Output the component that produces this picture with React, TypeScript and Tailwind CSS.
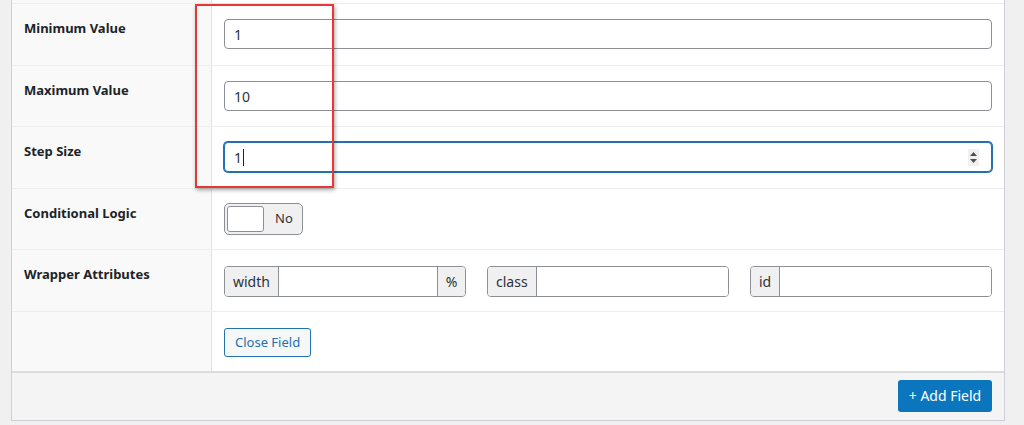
import React from "react";

const font = { fontFamily: '"Noto Sans", "Open Sans", "Liberation Sans", sans-serif' };

function Row({ label, h, children }: { label?: string; h: string; children?: React.ReactNode }) {
  return (
    <div className={`flex border-t border-[#eeeeee] ${h}`}>
      <div className="w-[200px] shrink-0 bg-[#f9f9f9] border-r border-[#e1e1e1] pl-[12px] pt-[16px]">
        {label && <div className="text-[13px] font-bold text-[#1d2327] leading-[16px]">{label}</div>}
      </div>
      <div className="flex-1 pl-[12px] pr-[12px] pt-[15px]">{children}</div>
    </div>
  );
}

function TextInput({ value, focused, spinner }: { value: string; focused?: boolean; spinner?: boolean }) {
  return (
    <div
      className={`relative h-[30px] rounded-[4px] bg-white flex items-center pl-[9px] text-[14px] text-[#2c3338] ${
        focused ? "border border-[#2271b1] shadow-[0_0_0_1px_#2271b1]" : "border border-[#8c8f94]"
      }`}
    >
      <span>{value}</span>
      {focused && <span className="inline-block w-px h-[17px] bg-[#1d2327] ml-[1px]" />}
      {spinner && (
        <div className="absolute right-[12px] top-[6px] w-[11px] h-[17px] bg-[#f0f0f0] flex flex-col items-center justify-center gap-[3px]">
          <svg width="7" height="4" viewBox="0 0 7 4"><path d="M0 4 L3.5 0 L7 4Z" fill="#505050" /></svg>
          <svg width="7" height="4" viewBox="0 0 7 4"><path d="M0 0 L3.5 4 L7 0Z" fill="#505050" /></svg>
        </div>
      )}
    </div>
  );
}

function Group({ label, w, suffix }: { label: string; w: string; suffix?: boolean }) {
  return (
    <div className={`flex h-[31px] ${w} border border-[#8c8f94] rounded-[4px] overflow-hidden text-[14px] text-[#2c3338]`}>
      <div className="bg-[#f0f0f1] border-r border-[#8c8f94] px-[8px] flex items-center">{label}</div>
      <div className="flex-1 bg-white" />
      {suffix && <div className="bg-[#f0f0f1] border-l border-[#8c8f94] w-[28px] flex items-center justify-center">%</div>}
    </div>
  );
}

export default function App() {
  return (
    <div className="relative w-[1024px] h-[425px] bg-[#f0f0f1] overflow-hidden" style={font}>
      <div className="ml-[11px] w-[994px] bg-white border-x border-b border-[#ccd0d4]">
        <div className="flex h-[3px]">
          <div className="w-[200px] bg-[#f9f9f9] border-r border-[#e1e1e1]" />
          <div className="flex-1" />
        </div>
        <Row label="Minimum Value" h="h-[62px]">
          <TextInput value="1" />
        </Row>
        <Row label="Maximum Value" h="h-[61px]">
          <TextInput value="10" />
        </Row>
        <Row label="Step Size" h="h-[62px]">
          <TextInput value="1" focused spinner />
        </Row>
        <Row label="Conditional Logic" h="h-[61px]">
          <div className="w-[79px] h-[32px] mt-[-1px] rounded-[5px] border border-[#8c8f94] bg-[#f0f0f1] flex items-center pl-[2px]">
            <div className="w-[37px] h-[26px] bg-white border border-[#8c8f94] rounded-[3px]" />
            <span className="ml-[11px] text-[13px] text-[#2c3338]">No</span>
          </div>
        </Row>
        <Row label="Wrapper Attributes" h="h-[62px]">
          <div className="flex gap-[21px] pt-[1px]">
            <Group label="width" w="w-[242px]" suffix />
            <Group label="class" w="w-[242px]" />
            <Group label="id" w="w-[242px]" />
          </div>
        </Row>
        <Row h="h-[60px]">
          <div className="pt-[1px]">
            <button className="h-[29px] px-[10px] rounded-[3px] border border-[#2271b1] bg-[#f6f7f7] text-[#2271b1] text-[13px] leading-none">
              Close Field
            </button>
          </div>
        </Row>
        <div className="h-[49px] bg-[#f4f4f4] border-t-2 border-[#dcdcde] flex justify-end items-start pt-[7px] pr-[12px]">
          <button className="h-[32px] w-[94px] rounded-[3px] bg-[#0b76bd] text-white text-[14px] leading-none">
            + Add Field
          </button>
        </div>
      </div>
      <div className="absolute left-[195px] top-[4px] w-[139px] h-[184px] border-2 border-[#e53935] shadow-[1px_2px_4px_rgba(0,0,0,0.35)]" />
    </div>
  );
}
